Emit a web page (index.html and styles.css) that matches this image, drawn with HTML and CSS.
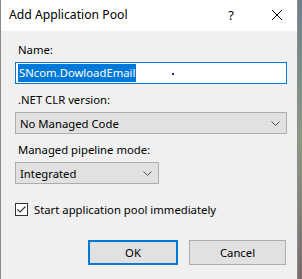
FILE: index.html
```html
<!DOCTYPE html>
<html lang="en">
<head>
    <meta charset="UTF-8">
    <title>Add Application Pool</title>
    <link rel="stylesheet" href="styles.css">
</head>
<body>
    <div class="window">
        <div class="titlebar">
            <span class="title">Add Application Pool</span>
            <span class="help">?</span>
            <svg class="close" width="12" height="12" viewBox="0 0 12 12">
                <path d="M1 1 L11 11 M11 1 L1 11" stroke="#000" stroke-width="1" fill="none"/>
            </svg>
        </div>
        <div class="content">
            <label class="label">Name:</label>
            <div class="textbox">
                <span class="selected">SNcom.DowloadEmail</span>
                <span class="dot"></span>
            </div>

            <label class="label gap">.NET CLR version:</label>
            <div class="combo wide">
                <span>No Managed Code</span>
                <svg class="chevron" width="9" height="5" viewBox="0 0 9 5">
                    <path d="M0.5 0.5 L4.5 4.5 L8.5 0.5" stroke="#505050" fill="none"/>
                </svg>
            </div>

            <label class="label gap">Managed pipeline mode:</label>
            <div class="combo narrow">
                <span>Integrated</span>
                <svg class="chevron" width="9" height="5" viewBox="0 0 9 5">
                    <path d="M0.5 0.5 L4.5 4.5 L8.5 0.5" stroke="#505050" fill="none"/>
                </svg>
            </div>

            <div class="check-row">
                <span class="checkbox">
                    <svg width="11" height="11" viewBox="0 0 11 11">
                        <path d="M1.5 5.5 L4 8 L9.5 2.5" stroke="#333" stroke-width="1.1" fill="none"/>
                    </svg>
                </span>
                <span>Start application pool immediately</span>
            </div>

            <div class="buttons">
                <button class="btn default">OK</button>
                <button class="btn">Cancel</button>
            </div>
        </div>
    </div>
</body>
</html>
```

FILE: styles.css
```css
body {
    margin: 0;
    background: linear-gradient(#6d7f8c, #8c9a86 50%, #7a6a6a);
    font-family: "Noto Sans", "Open Sans", sans-serif;
    font-size: 11.3px;
    color: #000;
}
.window {
    width: 298px;
    height: 279px;
    box-sizing: border-box;
    border-left: 1px solid #8a8a8a;
    border-right: 1px solid #8a8a8a;
    background: #f0f0f0;
}
.titlebar {
    height: 31px;
    background: #fff;
    display: flex;
    align-items: center;
    padding-left: 8px;
}
.title {
    flex: 1;
    font-size: 12.2px;
    margin-top: -2px;
}
.help {
    font-size: 13px;
    margin-right: 37px;
    margin-top: -2px;
}
.close {
    margin-right: 14px;
    margin-top: -2px;
}
.content {
    display: flex;
    flex-direction: column;
    align-items: flex-start;
    padding: 11px 10px 0 14px;
}
.label {
    line-height: 16px;
    height: 16px;
    padding-left: 3px;
    margin-bottom: 4px;
}
.gap {
    margin-top: 8px;
}
.textbox {
    width: 272px;
    height: 22px;
    box-sizing: border-box;
    border: 1px solid #0078d7;
    background: #fff;
    display: flex;
    align-items: center;
    padding-left: 2px;
    position: relative;
}
.selected {
    background: #0078d7;
    color: #fff;
    line-height: 18px;
    padding: 0 1px;
}
.dot {
    position: absolute;
    left: 156px;
    top: 10px;
    width: 2px;
    height: 2px;
    background: #2020d0;
}
.combo {
    height: 22px;
    box-sizing: border-box;
    border: 1px solid #adadad;
    background: #e1e1e1;
    display: flex;
    align-items: center;
    justify-content: space-between;
    padding: 0 6px 0 4px;
}
.wide {
    width: 272px;
}
.narrow {
    width: 144px;
}
.chevron {
    margin-top: 1px;
}
.check-row {
    display: flex;
    align-items: center;
    margin-top: 18px;
    gap: 6px;
}
.checkbox {
    width: 13px;
    height: 13px;
    box-sizing: border-box;
    border: 1px solid #333;
    background: #fff;
    display: flex;
    align-items: center;
    justify-content: center;
}
.buttons {
    display: flex;
    gap: 11px;
    margin-top: 23px;
    margin-left: 73px;
}
.btn {
    font-family: inherit;
    font-size: 11.3px;
    height: 25px;
    width: 97px;
    background: #e1e1e1;
    border: 1px solid #adadad;
    padding: 0;
}
.btn.default {
    width: 90px;
    border: 2px solid #0078d7;
}
```
